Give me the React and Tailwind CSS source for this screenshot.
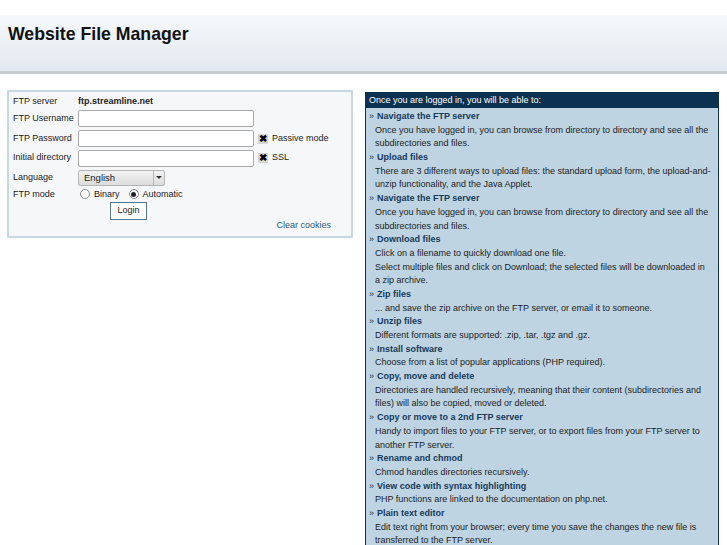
import React from "react";

const features = [
  {
    title: "Navigate the FTP server",
    lines: ["Once you have logged in, you can browse from directory to directory and see all the", "subdirectories and files."],
  },
  {
    title: "Upload files",
    lines: ["There are 3 different ways to upload files: the standard upload form, the upload-and-", "unzip functionality, and the Java Applet."],
  },
  {
    title: "Navigate the FTP server",
    lines: ["Once you have logged in, you can browse from directory to directory and see all the", "subdirectories and files."],
  },
  {
    title: "Download files",
    lines: [
      "Click on a filename to quickly download one file.",
      "Select multiple files and click on Download; the selected files will be downloaded in",
      "a zip archive.",
    ],
  },
  { title: "Zip files", lines: ["... and save the zip archive on the FTP server, or email it to someone."] },
  { title: "Unzip files", lines: ["Different formats are supported: .zip, .tar, .tgz and .gz."] },
  { title: "Install software", lines: ["Choose from a list of popular applications (PHP required)."] },
  {
    title: "Copy, move and delete",
    lines: ["Directories are handled recursively, meaning that their content (subdirectories and", "files) will also be copied, moved or deleted."],
  },
  {
    title: "Copy or move to a 2nd FTP server",
    lines: ["Handy to import files to your FTP server, or to export files from your FTP server to", "another FTP server."],
  },
  { title: "Rename and chmod", lines: ["Chmod handles directories recursively."] },
  { title: "View code with syntax highlighting", lines: ["PHP functions are linked to the documentation on php.net."] },
  {
    title: "Plain text editor",
    lines: ["Edit text right from your browser; every time you save the changes the new file is", "transferred to the FTP server."],
  },
];

const TextInput = () => (
  <div className="h-[17px] w-[176px] rounded-[2px] border border-[#a9a9a9] bg-white" />
);

const Check = ({ label }) => (
  <div className="ml-[4px] flex items-center">
    <span className="flex h-[10px] w-[10px] items-center justify-center bg-[#d6d6d6] text-[10px] font-bold leading-none text-black">
      ✖
    </span>
    <span className="ml-[4px]">{label}</span>
  </div>
);

const Radio = ({ checked }) => (
  <span className="flex h-[10px] w-[10px] items-center justify-center rounded-full border border-[#8a8a8a] bg-white">
    {checked && <span className="h-[5px] w-[5px] rounded-full bg-[#222]" />}
  </span>
);

const Row = ({ label, children, h = "h-[19.7px]" }) => (
  <div className={`flex items-center ${h}`}>
    <div className="w-[65px] shrink-0">{label}</div>
    {children}
  </div>
);

export default function App() {
  return (
    <div className="min-h-screen bg-white font-['Liberation_Sans',Arial,sans-serif] text-[9px] text-[#222]">
      {/* Header band */}
      <div className="pt-[15px]">
        <div className="h-[59px] border-b-[3px] border-[#c9cccf] bg-gradient-to-b from-[#f6f9fb] to-[#e1e8ef] pl-[8px] pt-[9px]">
          <h1 className="text-[17.7px] font-bold leading-[20px] text-[#111]">Website File Manager</h1>
        </div>
      </div>

      <div className="flex items-start pl-[7px] pt-[16px]">
        {/* Login form */}
        <div className="w-[346px] border-2 border-[#c6d8e1] bg-[#f5f7f8] px-[4px] pt-[3px] pb-[3px]">
          <Row label="FTP server" h="h-[14px]">
            <span className="font-bold">ftp.streamline.net</span>
          </Row>
          <Row label="FTP Username">
            <TextInput />
          </Row>
          <Row label="FTP Password">
            <TextInput />
            <Check label="Passive mode" />
          </Row>
          <Row label="Initial directory">
            <TextInput />
            <Check label="SSL" />
          </Row>
          <Row label="Language">
            <div className="flex h-[16px] w-[87px] items-center rounded-[2px] border border-[#b5b5b5] bg-gradient-to-b from-[#f3f3f3] to-[#dcdcdc]">
              <span className="flex-1 pl-[5px] text-[9.5px]">English</span>
              <span className="flex h-full w-[11px] items-center justify-center border-l border-[#b5b5b5]">
                <span className="h-0 w-0 border-x-[3px] border-t-[3px] border-x-transparent border-t-[#333]" />
              </span>
            </div>
          </Row>
          <Row label="FTP mode" h="h-[13px]">
            <div className="flex items-center pl-[2px]">
              <Radio />
              <span className="ml-[4px]">Binary</span>
              <span className="ml-[9px]">
                <Radio checked />
              </span>
              <span className="ml-[4px]">Automatic</span>
            </div>
          </Row>
          <div className="mt-[1px] flex h-[18px] pl-[97px]">
            <button className="h-[18px] w-[37px] border border-[#56768e] bg-white text-[9px] text-[#222]">Login</button>
          </div>
          <div className="flex h-[13px] items-center justify-end pr-[16px] pt-[1px] pb-[3px]">
            <span className="text-[#2c5a78]">Clear cookies</span>
          </div>
        </div>

        {/* Features */}
        <div className="ml-[12px] mt-[2px] w-[354px] border border-[#0c3150]">
          <div className="flex h-[15px] items-center bg-[#0c3150] pl-[3px] text-white">
            Once you are logged in, you will be able to:
          </div>
          <div className="bg-[#bed4e2] pb-[4px] pt-[2px] leading-[13.68px]">
            {features.map((f, i) => (
              <div key={i}>
                <div className="flex font-bold text-[#143a5c]">
                  <span className="w-[11px] pl-[3px] font-normal">»</span>
                  <span>{f.title}</span>
                </div>
                {f.lines.map((l, j) => (
                  <div key={j} className="pl-[9px]">
                    {l}
                  </div>
                ))}
              </div>
            ))}
          </div>
        </div>
      </div>
    </div>
  );
}
